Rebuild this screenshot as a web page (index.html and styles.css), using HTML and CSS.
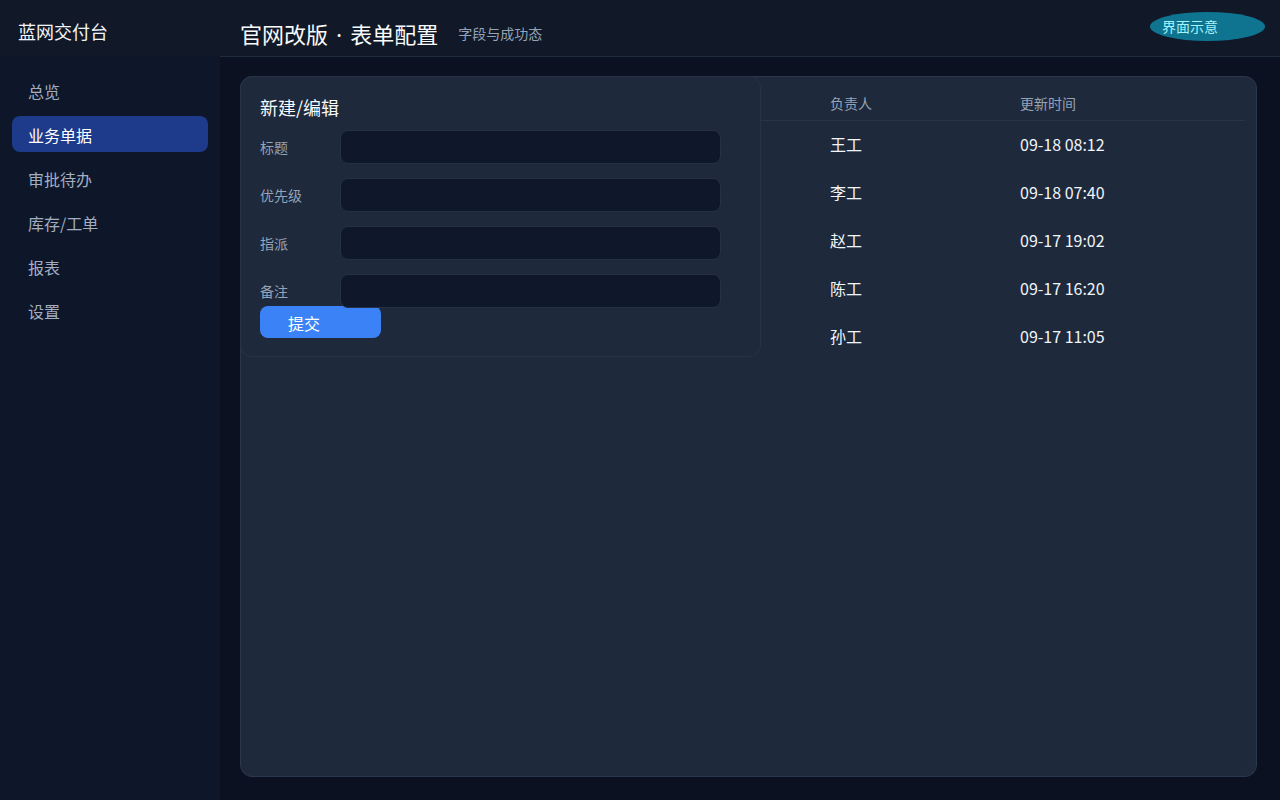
FILE: index.html
```html
<!DOCTYPE html>
<html>
<head>
  <meta charset="utf-8">
  <link rel="stylesheet" href="styles.css">
</head>
<body>
  <div class="app">
    <aside class="sidebar">
      <div class="brand">蓝网交付台</div>
      <nav class="nav">
        <a class="nav-item">总览</a>
        <a class="nav-item active">业务单据</a>
        <a class="nav-item">审批待办</a>
        <a class="nav-item">库存/工单</a>
        <a class="nav-item">报表</a>
        <a class="nav-item">设置</a>
      </nav>
    </aside>

    <div class="main">
      <header class="topbar">
        <h1 class="title">官网改版 <span class="sep">·</span> 表单配置</h1>
        <span class="subtitle">字段与成功态</span>
        <span class="badge">界面示意</span>
      </header>

      <div class="content">
        <div class="card">
          <div class="form-panel">
            <h2 class="form-title">新建/编辑</h2>
            <div class="field">
              <label>标题</label>
              <div class="input"></div>
            </div>
            <div class="field">
              <label>优先级</label>
              <div class="input"></div>
            </div>
            <div class="field">
              <label>指派</label>
              <div class="input"></div>
            </div>
            <div class="field">
              <label>备注</label>
              <div class="input"></div>
            </div>
            <button class="submit">提交</button>
          </div>

          <div class="table-wrap">
            <table class="list">
              <thead>
                <tr>
                  <th class="col-a"></th>
                  <th class="col-b">负责人</th>
                  <th>更新时间</th>
                </tr>
              </thead>
              <tbody>
                <tr><td></td><td>王工</td><td>09-18 08:12</td></tr>
                <tr><td></td><td>李工</td><td>09-18 07:40</td></tr>
                <tr><td></td><td>赵工</td><td>09-17 19:02</td></tr>
                <tr><td></td><td>陈工</td><td>09-17 16:20</td></tr>
                <tr><td></td><td>孙工</td><td>09-17 11:05</td></tr>
              </tbody>
            </table>
          </div>
        </div>
      </div>
    </div>
  </div>
</body>
</html>
```

FILE: styles.css
```css
* {
  box-sizing: border-box;
}

body {
  margin: 0;
  background-color: #0b1120;
  color: #f1f5f9;
  font-family: "Noto Sans CJK SC", "Noto Sans", sans-serif;
}

.app {
  display: flex;
  height: 800px;
}

/* 侧边栏 */
.sidebar {
  width: 220px;
  background-color: #0e1729;
  display: flex;
  flex-direction: column;
}

.brand {
  height: 56px;
  padding: 17px 18px 0;
  font-size: 18px;
  line-height: 28px;
  color: #f1f5f9;
  background-color: #111827;
}

.nav {
  display: flex;
  flex-direction: column;
  gap: 8px;
  padding: 16px 12px 0;
}

.nav-item {
  height: 36px;
  line-height: 38px;
  padding-left: 16px;
  font-size: 16px;
  color: #a3aec0;
  border-radius: 8px;
}

.nav-item.active {
  background-color: #1e3a8a;
  color: #ffffff;
}

/* 主区域 */
.main {
  flex: 1;
  display: flex;
  flex-direction: column;
}

.topbar {
  position: relative;
  height: 57px;
  display: flex;
  align-items: center;
  padding: 9px 20px 0;
  background-color: #111827;
  border-bottom: 1px solid #1f2b3d;
}

.title {
  margin: 0;
  font-size: 22px;
  font-weight: 400;
  line-height: 32px;
  color: #f8fafc;
}

.title .sep {
  font-family: "Noto Sans CJK JP", "DejaVu Sans", sans-serif;
}

.subtitle {
  margin-left: 20px;
  font-size: 14px;
  color: #94a3b8;
}

.badge {
  position: absolute;
  top: 12px;
  right: 15px;
  width: 115px;
  height: 29px;
  padding-left: 12px;
  line-height: 29px;
  font-size: 14px;
  color: #a5f3fc;
  background-color: #0e7490;
  border-radius: 50%;
}

.content {
  flex: 1;
  padding: 19px 23px 23px 20px;
}

.card {
  display: flex;
  align-items: flex-start;
  height: 701px;
  background-color: #1e293b;
  border: 1px solid #2a374c;
  border-radius: 12px;
}

/* 表单 */
.form-panel {
  width: 521px;
  margin: -1px 0 0 -1px;
  padding: 15px 19px 18px;
  border: 1px solid #263246;
  border-radius: 12px;
}

.form-title {
  margin: 0 0 8px;
  font-size: 18px;
  font-weight: 400;
  line-height: 30px;
  color: #f8fafc;
}

.field {
  display: flex;
  align-items: center;
  margin-bottom: 14px;
}

.field label {
  width: 80px;
  font-size: 14px;
  color: #94a3b8;
}

.input {
  width: 381px;
  height: 34px;
  background-color: #0f172a;
  border: 1px solid #253146;
  border-radius: 8px;
}

.submit {
  display: block;
  width: 121px;
  height: 32px;
  margin-top: -16px;
  padding: 2px 0 0 28px;
  text-align: left;
  font-family: inherit;
  font-size: 16px;
  color: #ffffff;
  background-color: #3b82f6;
  border: none;
  border-radius: 8px;
}

/* 列表 */
.table-wrap {
  flex: 1;
  padding: 10px 11px 0 0;
}

.list {
  width: 100%;
  border-collapse: collapse;
}

.list th {
  height: 33px;
  padding: 0 12px;
  text-align: left;
  font-size: 14px;
  font-weight: 400;
  color: #94a3b8;
  border-bottom: 1px solid #27344a;
}

.list td {
  height: 48px;
  padding: 0 12px;
  font-size: 16px;
  color: #f1f5f9;
}

.col-a {
  width: 57px;
}

.col-b {
  width: 190px;
}
```
